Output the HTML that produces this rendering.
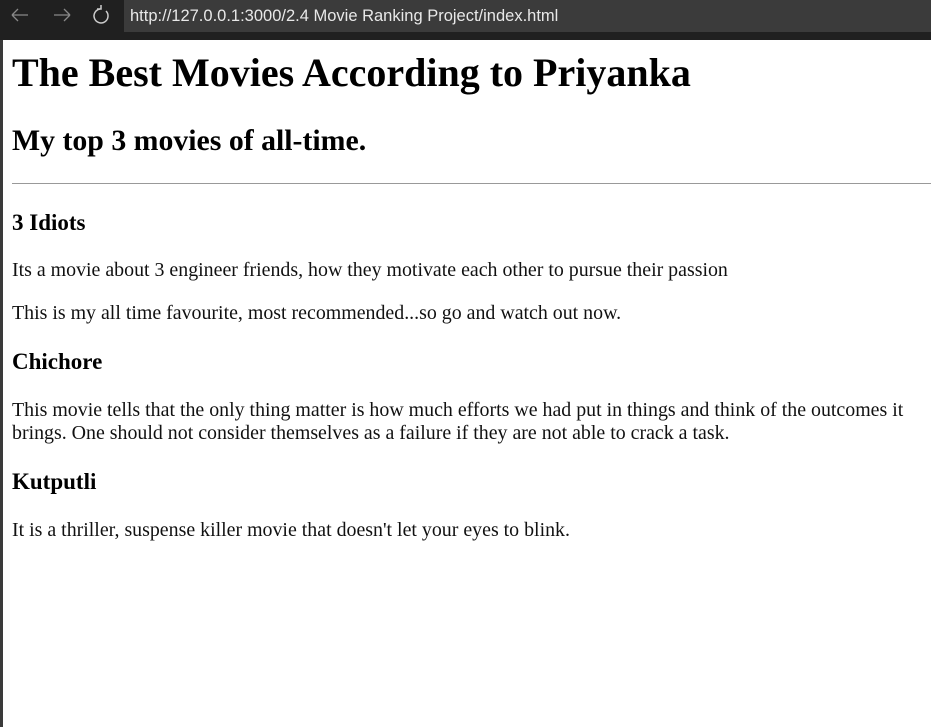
<!DOCTYPE html>
<html><head><meta charset="utf-8"><style>
html,body{margin:0;padding:0;width:931px;height:727px;overflow:hidden;background:#fff;position:relative}
.bar{position:absolute;left:0;top:0;width:931px;height:40px;background:#202020}
.addr{position:absolute;left:124px;top:0;width:807px;height:32px;background:#3b3b3b;color:#e8e8e8;font:16.5px "Liberation Sans",sans-serif;line-height:32px;padding-left:6px;box-sizing:border-box}
.strip{position:absolute;left:0;top:40px;width:3px;height:687px;background:#3a3a3a}
.t{position:absolute;left:12px;white-space:nowrap;line-height:1;font-family:"Liberation Serif",serif;color:#111}
.h1{font-size:40px;font-weight:bold;color:#000}
.h2{font-size:29.8px;font-weight:bold;color:#000}
.h3{font-size:23px;font-weight:bold;color:#000}
.p{font-size:19.9px}
hr{position:absolute;left:12px;top:183px;width:919px;margin:0;border:0;border-top:1px solid #999;height:0}
</style></head><body>
<div class="bar">
<svg width="124" height="32" style="position:absolute;left:0;top:0" fill="none" stroke="#888" stroke-width="1.3">
<path d="M12 15h16M12 15l6-6M12 15l6 6"/>
<path d="M54 15h16M70 15l-6-6M70 15l-6 6"/>
<path d="M100 9a7 7 0 1 0 6 2" stroke="#ccc" stroke-width="1.5"/><path d="M101 5v4h-4" stroke="#ccc" stroke-width="1.5"/>
</svg>
<div class="addr">http://127.0.0.1:3000/2.4 Movie Ranking Project/index.html</div>
</div>
<div class="strip"></div>
<div class="t h1" style="top:53px">The Best Movies According to Priyanka</div>
<div class="t h2" style="top:126px">My top 3 movies of all-time.</div>
<hr>
<div class="t h3" style="top:211px">3 Idiots</div>
<div class="t p" style="top:261px">Its a movie about 3 engineer friends, how they motivate each other to pursue their passion</div>
<div class="t p" style="top:304px">This is my all time favourite, most recommended...so go and watch out now.</div>
<div class="t h3" style="top:350px">Chichore</div>
<div class="t p" style="top:401px">This movie tells that the only thing matter is how much efforts we had put in things and think of the outcomes it</div>
<div class="t p" style="top:424px">brings. One should not consider themselves as a failure if they are not able to crack a task.</div>
<div class="t h3" style="top:470px">Kutputli</div>
<div class="t p" style="top:521px">It is a thriller, suspense killer movie that doesn't let your eyes to blink.</div>
</body></html>
